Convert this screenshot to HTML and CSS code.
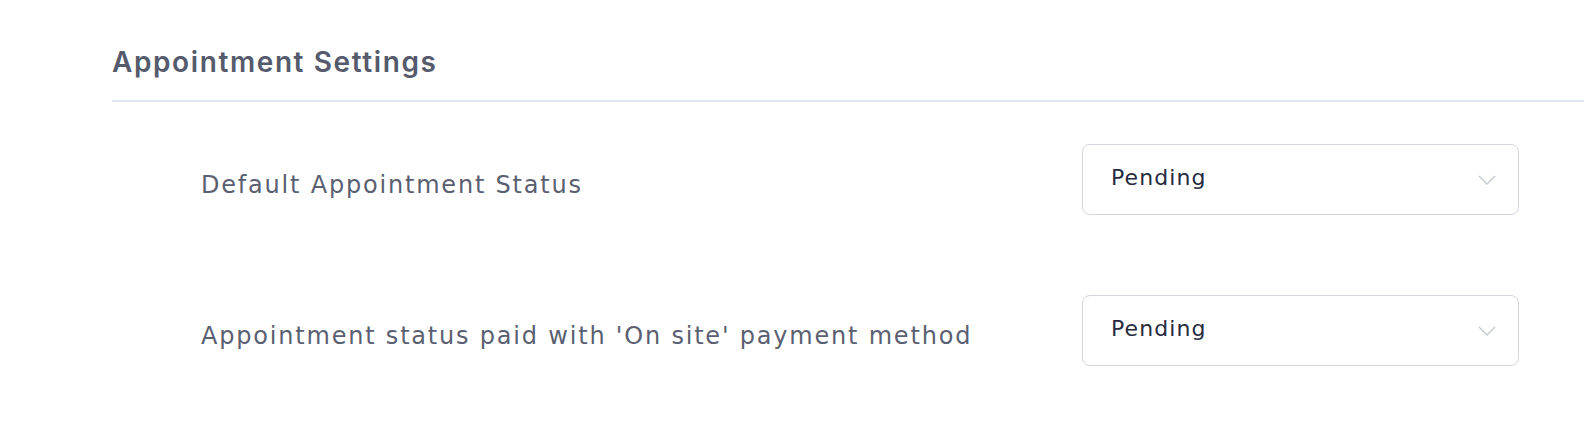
FILE: index.html
```html
<!DOCTYPE html>
<html>
<head>
<meta charset="utf-8">
<link rel="stylesheet" href="styles.css">
</head>
<body>
<div class="page">
  <div class="section">
    <h2 class="title">Appointment Settings</h2>
    <div class="rows">
      <div class="row">
        <div class="label">Default Appointment Status</div>
        <div class="select">
          <span class="value">Pending</span>
          <svg class="chev" width="18" height="10" viewBox="0 0 18 10"><path d="M1 1 L9 9 L17 1" fill="none" stroke="#c3c7d0" stroke-width="1.3"/></svg>
        </div>
      </div>
      <div class="row">
        <div class="label">Appointment status paid with 'On site' payment method</div>
        <div class="select">
          <span class="value">Pending</span>
          <svg class="chev" width="18" height="10" viewBox="0 0 18 10"><path d="M1 1 L9 9 L17 1" fill="none" stroke="#c3c7d0" stroke-width="1.3"/></svg>
        </div>
      </div>
    </div>
  </div>
</div>
</body>
</html>
```
FILE: styles.css
```css
html, body { margin: 0; padding: 0; background: #ffffff; }
.page { padding: 0 0 0 112px; }
.section { padding-top: 44px; }
.title {
  margin: 0;
  font-family: Inter, "Liberation Sans", sans-serif;
  font-weight: 600;
  font-size: 28px;
  line-height: 36px;
  letter-spacing: 1.6px;
  color: #555b6d;
  padding-bottom: 20px;
  border-bottom: 2px solid #e0e5ee;
}
.rows { padding: 42px 0 0 89px; display: flex; flex-direction: column; gap: 80px; }
.row { display: flex; align-items: center; }
.label {
  width: 881px;
  padding-top: 10px;
  font-family: "DejaVu Sans", sans-serif;
  font-size: 24px;
  color: #5a5f71;
  letter-spacing: 1.8px;
}
.select {
  box-sizing: border-box;
  width: 437px;
  height: 71px;
  border: 1.5px solid #d2d6df;
  border-radius: 8px;
  display: flex;
  align-items: center;
  justify-content: space-between;
  padding: 0 22px 0 28px;
}
.value {
  padding-bottom: 5px;
  font-family: "DejaVu Sans", sans-serif;
  font-size: 22px;
  color: #262b40;
  letter-spacing: 1.1px;
}
.chev { display: block; }
```
